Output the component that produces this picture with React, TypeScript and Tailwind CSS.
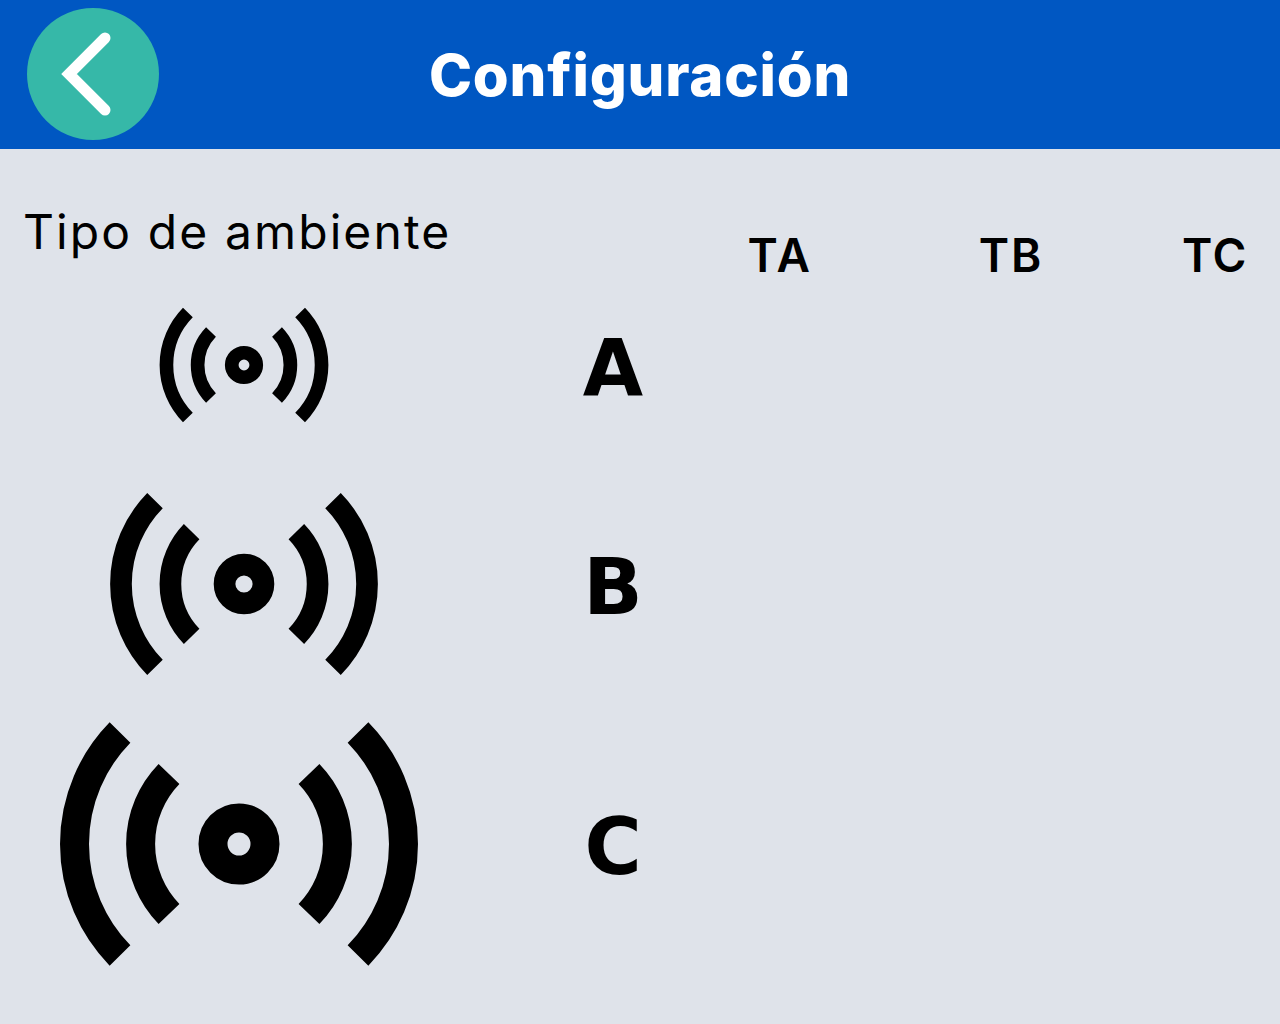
import type { ReactNode } from 'react';

const FONT = 'font-["Inter","Liberation_Sans",sans-serif]';

// C icon is the reference size, the others are scaled from it
function Antenna({ width, height }: { width: number; height: number }) {
  return (
    <svg width={width} height={height} viewBox="-180 -123 360 246" fill="none" stroke="#000" strokeWidth="29">
      <path d="M-119 -111.5A159.4 159.4 0 0 0 -119 111.5" />
      <path d="M-70 -70A100.5 100.5 0 0 0 -70 70" />
      <path d="M119 -111.5A159.4 159.4 0 0 1 119 111.5" />
      <path d="M70 -70A100.5 100.5 0 0 1 70 70" />
      <circle cx="0" cy="0" r="26" strokeWidth="29" />
    </svg>
  );
}

function AmbientRow({ label, className, children }: { label: string; className: string; children: ReactNode }) {
  return (
    <div className={`flex items-center ${className}`}>
      <div className="w-[488px] flex justify-center">{children}</div>
      <span className='w-[250px] pt-[6px] text-center text-[78px] leading-none font-bold font-["DejaVu_Sans",sans-serif]'>
        {label}
      </span>
    </div>
  );
}

export default function App() {
  return (
    <div className={`${FONT} w-[1280px] h-[1024px] overflow-hidden bg-[#dfe3ea] text-black`}>
      <header className="relative h-[149px] bg-[#0057c2] flex items-center justify-center">
        <button className="absolute left-[27px] top-[8px] w-[132px] h-[132px] rounded-full bg-[#36b8a8] flex items-center justify-center">
          <svg width="132" height="132" viewBox="0 0 132 132" fill="none" stroke="#fff" strokeWidth="11" strokeLinecap="round" strokeLinejoin="miter">
            <path d="M78 30L42 66L78 102" />
          </svg>
        </button>
        <h1 className="text-[58px] font-extrabold text-white tracking-[0.8px] leading-none mt-[1px]">Configuración</h1>
      </header>

      <div className="flex h-[146px]">
        <div className="w-[720px] pl-[23px] pt-[53px] text-[48px] leading-[60px] tracking-[2.1px] whitespace-nowrap">
          Tipo de ambiente
        </div>
        <div className="w-[120px] pt-[79px] text-center text-[46px] font-semibold leading-[54px] tracking-[2.5px]">TA</div>
        <div className="w-[120px] ml-[111px] pt-[79px] text-center text-[46px] font-semibold leading-[54px] tracking-[2px]">TB</div>
        <div className="w-[120px] ml-[84px] pt-[79px] text-center text-[46px] font-semibold leading-[54px] tracking-[1.5px]">TC</div>
      </div>

      <AmbientRow label="A" className="h-[140px]">
        <Antenna width={170} height={116} />
      </AmbientRow>
      <AmbientRow label="B" className="h-[230px] mt-[34px]">
        <div className="flex"><Antenna width={270} height={184} /></div>
      </AmbientRow>
      <AmbientRow label="C" className="h-[246px] mt-[22px]">
        <div className="flex pr-[10px]"><Antenna width={360} height={246} /></div>
      </AmbientRow>
    </div>
  );
}
